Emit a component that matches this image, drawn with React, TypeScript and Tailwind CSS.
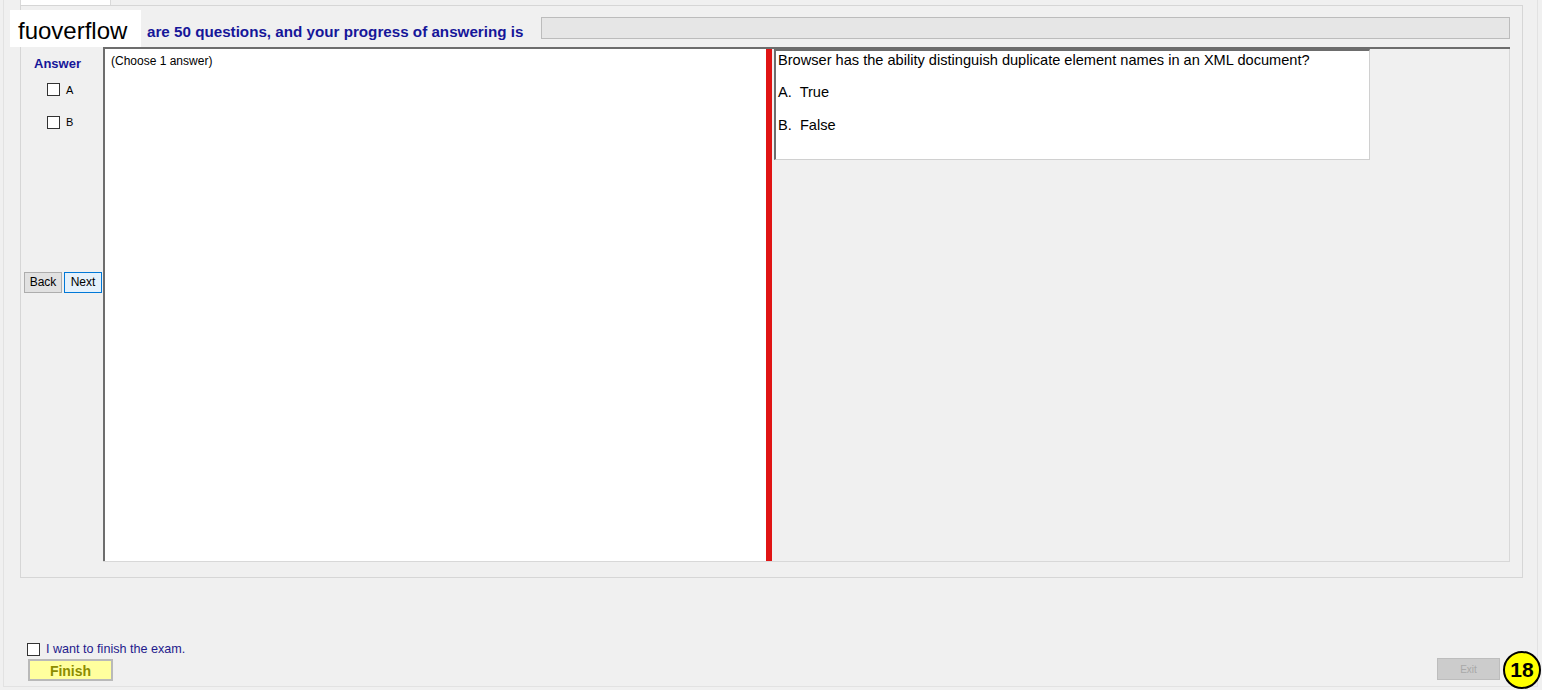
import React from "react";

const options = [
    { key: "A", text: "True" },
    { key: "B", text: "False" },
];

function Box({ className = "" }: { className?: string }) {
    return <span className={`inline-block h-[13px] w-[13px] border border-[#333] bg-white ${className}`} />;
}

export default function App() {
    return (
        <div className="relative flex h-[690px] w-[1542px] flex-col overflow-hidden bg-[#f0f0f0] pb-[3px] pl-[3px] pr-[4px] font-['Liberation_Sans',Arial,sans-serif] text-black">
            <div className="flex flex-1 flex-col border-x border-b border-[#e2e2e2] px-[16px]">
                {/* tab header */}
                <div className="h-[5px] w-[91px] border-x border-[#d9d9d9] bg-white" />

                {/* tab page */}
                <div className="flex h-[573px] w-[1503px] flex-col border border-[#d6d6d6] pl-[3px] pr-[12px] pt-[11px]">
                    <div className="flex h-[22px] items-start">
                        <span className="ml-[123px] mt-[6px] whitespace-nowrap text-[15.2px] font-bold leading-[18px] text-[#161699]">
                            are 50 questions, and your progress of answering is
                        </span>
                        <div className="ml-auto h-[22px] w-[969px] border border-[#bcbcbc] bg-[#e6e6e6]" />
                    </div>

                    <div className="mt-[8px] flex h-[515px]">
                        {/* answer column */}
                        <div className="flex w-[79px] flex-col">
                            <div className="mt-[7px] pl-[10px] text-[13px] font-bold text-[#161699]">Answer</div>
                            <div className="mt-[8px] flex flex-col gap-[16px] pl-[23px]">
                                {options.map((o) => (
                                    <label key={o.key} className="flex items-center gap-[6px] text-[11px]">
                                        <Box />
                                        {o.key}
                                    </label>
                                ))}
                            </div>
                            <div className="mt-[141px] flex gap-[2px]">
                                <button className="h-[21px] w-[38px] border border-[#adadad] bg-[#e1e1e1] text-[12px]">Back</button>
                                <button className="h-[21px] w-[38px] border border-[#0078d7] bg-[#e5f1fb] text-[12px]">Next</button>
                            </div>
                        </div>

                        {/* split container */}
                        <div className="flex flex-1 border-b border-t-2 border-b-[#d8d8d8] border-t-[#6d6d6d]">
                            <div className="w-[663px] border-l-2 border-[#6d6d6d] bg-white px-[6px] pt-[3px] text-[12px]">
                                (Choose 1 answer)
                            </div>
                            <div className="w-[6px] bg-[#e01414]" />
                            <div className="flex-1 border-r border-[#d8d8d8] pl-[2px]">
                                <div className="h-[111px] w-[596px] border-b border-l-2 border-r border-t-2 border-b-[#d0d0d0] border-l-[#6d6d6d] border-r-[#d0d0d0] border-t-[#6d6d6d] bg-white px-[2px] pt-[1px] text-[14.6px] leading-[17px]">
                                    <p className="whitespace-nowrap">Browser has the ability distinguish duplicate element names in an XML document?</p>
                                    <p className="mt-[15px]">A.&nbsp; True</p>
                                    <p className="mt-[16px]">B.&nbsp; False</p>
                                </div>
                            </div>
                        </div>
                    </div>
                </div>

                {/* bottom */}
                <div className="flex flex-1 items-end justify-between pb-[5px]">
                    <div className="flex flex-col pl-[7px]">
                        <label className="flex items-center gap-[6px] text-[12.6px] leading-[18px] text-[#1f1a8c]">
                            <Box />
                            I want to finish the exam.
                        </label>
                        <button className="ml-[1px] mt-[1px] h-[22px] w-[85px] border-2 border-[#b9b9b9] bg-[#ffff9e] text-[14px] font-bold text-[#8c8c00]">
                            Finish
                        </button>
                    </div>
                    <button className="mb-[1px] mr-[21px] h-[22px] w-[63px] border border-[#bdbdbd] bg-[#cccccc] text-[10px] text-[#a8a8a8]">
                        Exit
                    </button>
                </div>
            </div>

            {/* watermark */}
            <div className="absolute left-[10px] top-[10px] flex h-[37px] w-[131px] items-center bg-white pl-[8px] pt-[5px] text-[24px]">
                fuoverflow
            </div>

            {/* badge */}
            <div className="absolute bottom-[1px] right-[1px] flex h-[38px] w-[38px] items-center justify-center rounded-full border-2 border-black bg-[#ffff00] text-[21px] font-bold">
                18
            </div>
        </div>
    );
}
